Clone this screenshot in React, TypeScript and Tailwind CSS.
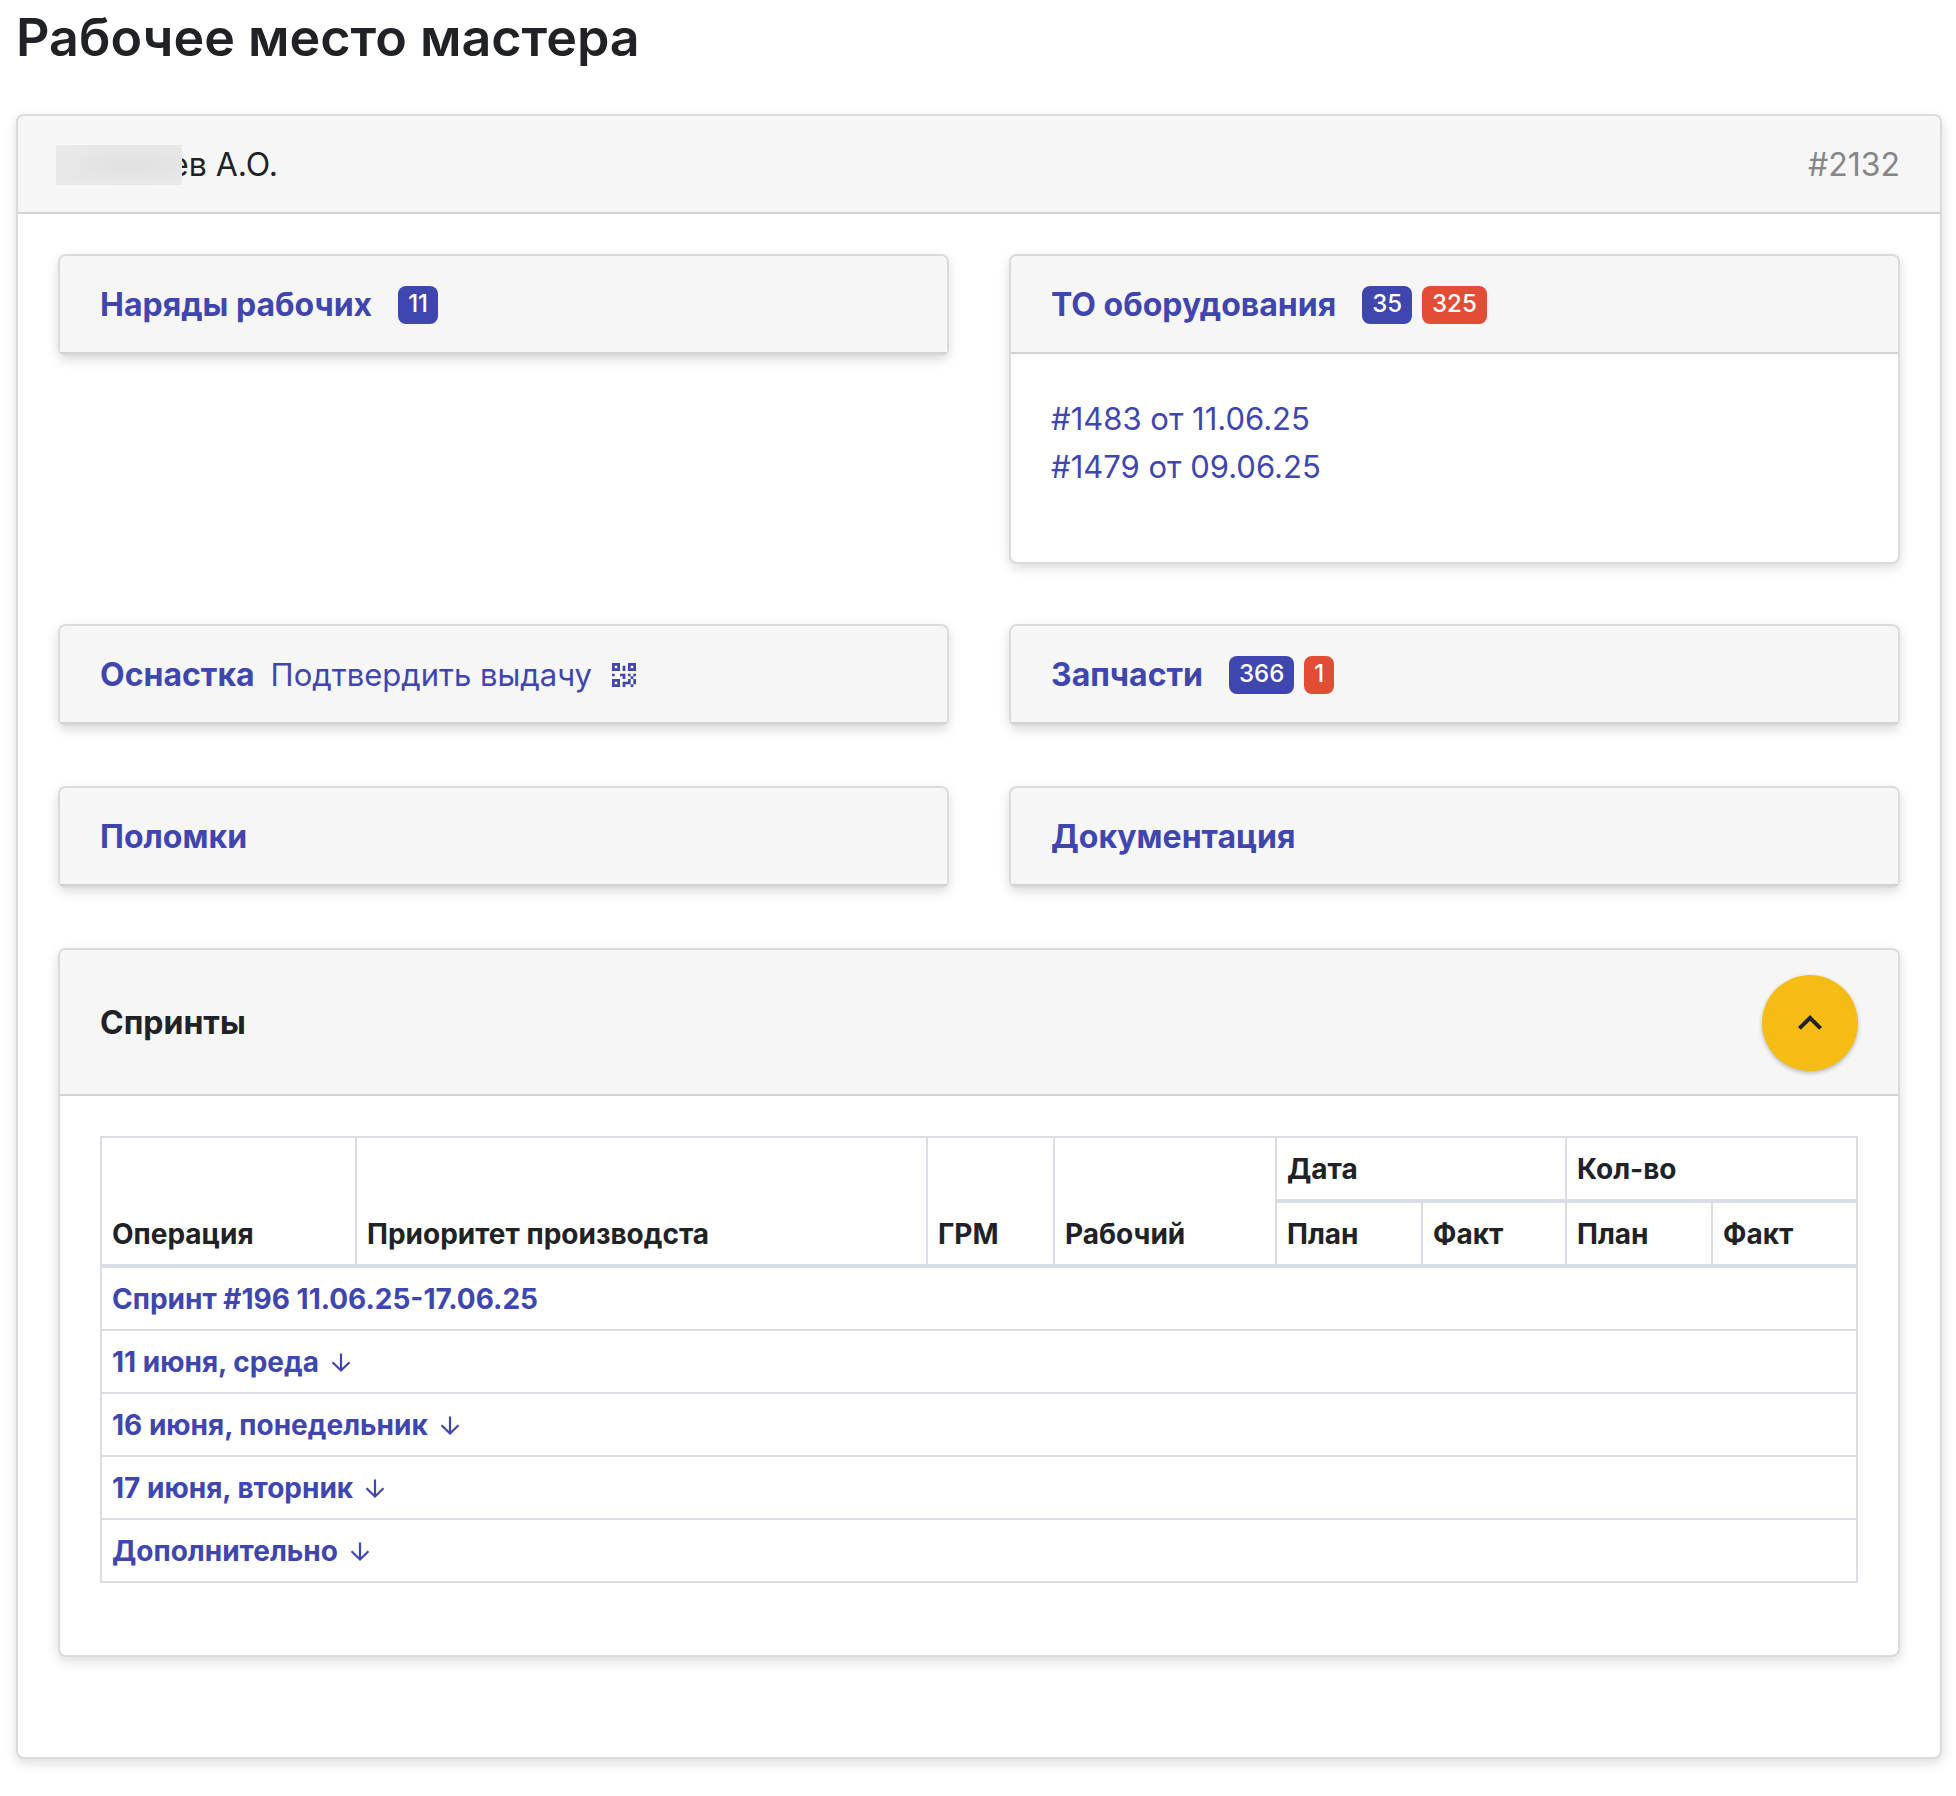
import { useState } from "react";
import type { ReactNode } from "react";

type IconProps = { className?: string };

const days = [
  "11 июня, среда",
  "16 июня, понедельник",
  "17 июня, вторник",
  "Дополнительно",
];

const QrIcon = ({ className }: IconProps) => (
  <svg viewBox="0 0 24 24" fill="currentColor" className={className} aria-hidden="true">
    <path d="M3,11H5V13H3V11M11,5H13V9H11V5M9,11H13V15H11V13H9V11M15,11H17V13H19V11H21V13H19V15H21V19H19V21H17V19H13V21H11V17H15V15H17V13H15V11M19,19V15H17V19H19M15,3H21V9H15V3M17,5V7H19V5H17M3,3H9V9H3V3M5,5V7H7V5H5M3,15H9V21H3V15M5,17V19H7V17H5Z" />
  </svg>
);

const ChevronUpIcon = ({ className }: IconProps) => (
  <svg viewBox="0 0 24 24" fill="currentColor" className={className} aria-hidden="true">
    <path d="M7.41,15.41L12,10.83L16.59,15.41L18,14L12,8L6,14L7.41,15.41Z" />
  </svg>
);

const ArrowDownIcon = ({ className }: IconProps) => (
  <svg
    viewBox="0 0 28 28"
    fill="none"
    stroke="currentColor"
    strokeWidth="2.2"
    className={className}
    aria-hidden="true"
  >
    <path d="M14 4.5V21.5M5.5 13.2L14 21.5L22.5 13.2" />
  </svg>
);

const Card = ({ children }: { children: ReactNode }) => (
  <section className="self-start rounded-lg border-2 border-black/[.14] bg-white shadow-[0_4px_12px_rgba(0,0,0,0.14)]">
    {children}
  </section>
);

const CardHeader = ({ children }: { children: ReactNode }) => (
  <header className="flex items-center rounded-t-md border-b-2 border-black/[.14] bg-[#f6f6f6] px-10 pt-[25px] pb-[23px]">
    {children}
  </header>
);

const CardLink = ({ children }: { children: ReactNode }) => (
  <a href="#" className="font-bold text-[#3f46ad]">
    {children}
  </a>
);

const Badges = ({ total, overdue }: { total: number; overdue?: number }) => (
  <div className="ml-[26px] flex gap-2.5 text-2xl font-medium text-white">
    <span className="rounded-lg bg-[#3f46ad] px-2.5 pt-0.5 pb-1">{total}</span>
    {overdue && (
      <span className="rounded-lg bg-[#e34c35] px-2.5 pt-0.5 pb-1">{overdue}</span>
    )}
  </div>
);

const cell = "border-2 border-[#dadde2] px-2.5 pt-0.5";
const headCell = "border-2 border-b-4 border-[#dadde2] px-2.5 pt-0.5 text-left align-bottom";

const SprintsTable = () => (
  <table className="w-full table-fixed border-collapse text-[28px] leading-[59px] font-bold">
    <colgroup>
      <col className="w-[255px]" />
      <col />
      <col className="w-[127px]" />
      <col className="w-[222px]" />
      <col className="w-[146px]" />
      <col className="w-[144px]" />
      <col className="w-[146px]" />
      <col className="w-[145px]" />
    </colgroup>
    <thead>
      <tr>
        <th rowSpan={2} className={headCell}>Операция</th>
        <th rowSpan={2} className={headCell}>Приоритет производста</th>
        <th rowSpan={2} className={headCell}>ГРМ</th>
        <th rowSpan={2} className={headCell}>Рабочий</th>
        <th colSpan={2} className={headCell}>Дата</th>
        <th colSpan={2} className={headCell}>Кол-во</th>
      </tr>
      <tr>
        <th className={headCell}>План</th>
        <th className={headCell}>Факт</th>
        <th className={headCell}>План</th>
        <th className={headCell}>Факт</th>
      </tr>
    </thead>
    <tbody className="text-[#3f46ad]">
      <tr className="h-16">
        <td colSpan={8} className={cell}>
          <a href="#">Спринт #196 11.06.25-17.06.25</a>
        </td>
      </tr>
      {days.map((day) => (
        <tr key={day}>
          <td colSpan={8} className={cell}>
            <a href="#" className="flex items-center gap-2">
              {day}
              <ArrowDownIcon className="size-7" />
            </a>
          </td>
        </tr>
      ))}
    </tbody>
  </table>
);

export default function App() {
  const [open, setOpen] = useState(true);

  return (
    <main className="bg-white px-4 pt-1 pr-3.5 pb-9 font-[Inter,sans-serif] text-[32px] leading-[48px] text-[#212226]">
      <h1 className="mb-[42px] text-[52px] leading-[68px] font-semibold">
        Рабочее место мастера
      </h1>

      <Card>
        <CardHeader>
          <div className="relative pl-28">
            ев А.О.
            <span className="absolute top-1 -left-0.5 h-10 w-[126px] bg-radial-[at_60%_50%] from-[#e0e0e0] to-[#ebebeb]" />
          </div>
          <span className="ml-auto text-[#868688]">#2132</span>
        </CardHeader>

        <div className="grid grid-cols-2 gap-[60px] px-10 pt-10 pb-[100px]">
          <Card>
            <CardHeader>
              <CardLink>Наряды рабочих</CardLink>
              <Badges total={11} />
            </CardHeader>
          </Card>

          <Card>
            <CardHeader>
              <CardLink>ТО оборудования</CardLink>
              <Badges total={35} overdue={325} />
            </CardHeader>
            <ul className="px-10 pt-[41px] pb-[71px] text-[31px] text-[#3f46ad]">
              <li>
                <a href="#">#1483 от 11.06.25</a>
              </li>
              <li>
                <a href="#">#1479 от 09.06.25</a>
              </li>
            </ul>
          </Card>

          <Card>
            <CardHeader>
              <CardLink>Оснастка</CardLink>
              <a href="#" className="ml-4 flex items-center gap-4 text-[31px] text-[#3f46ad]">
                Подтвердить выдачу
                <QrIcon className="size-8" />
              </a>
            </CardHeader>
          </Card>

          <Card>
            <CardHeader>
              <CardLink>Запчасти</CardLink>
              <Badges total={366} overdue={1} />
            </CardHeader>
          </Card>

          <Card>
            <CardHeader>
              <CardLink>Поломки</CardLink>
            </CardHeader>
          </Card>

          <Card>
            <CardHeader>
              <CardLink>Документация</CardLink>
            </CardHeader>
          </Card>

          <div className="col-span-2">
            <Card>
              <CardHeader>
                <h2 className="font-bold">Спринты</h2>
                <button
                  type="button"
                  aria-label="Свернуть"
                  aria-expanded={open}
                  onClick={() => setOpen(!open)}
                  className="ml-auto flex size-24 items-center justify-center rounded-full bg-[#f5bd14] shadow-[0_2px_4px_rgba(0,0,0,0.25)]"
                >
                  <ChevronUpIcon className="size-12" />
                </button>
              </CardHeader>
              {open && (
                <div className="px-10 pt-10 pb-[72px]">
                  <SprintsTable />
                </div>
              )}
            </Card>
          </div>
        </div>
      </Card>
    </main>
  );
}
